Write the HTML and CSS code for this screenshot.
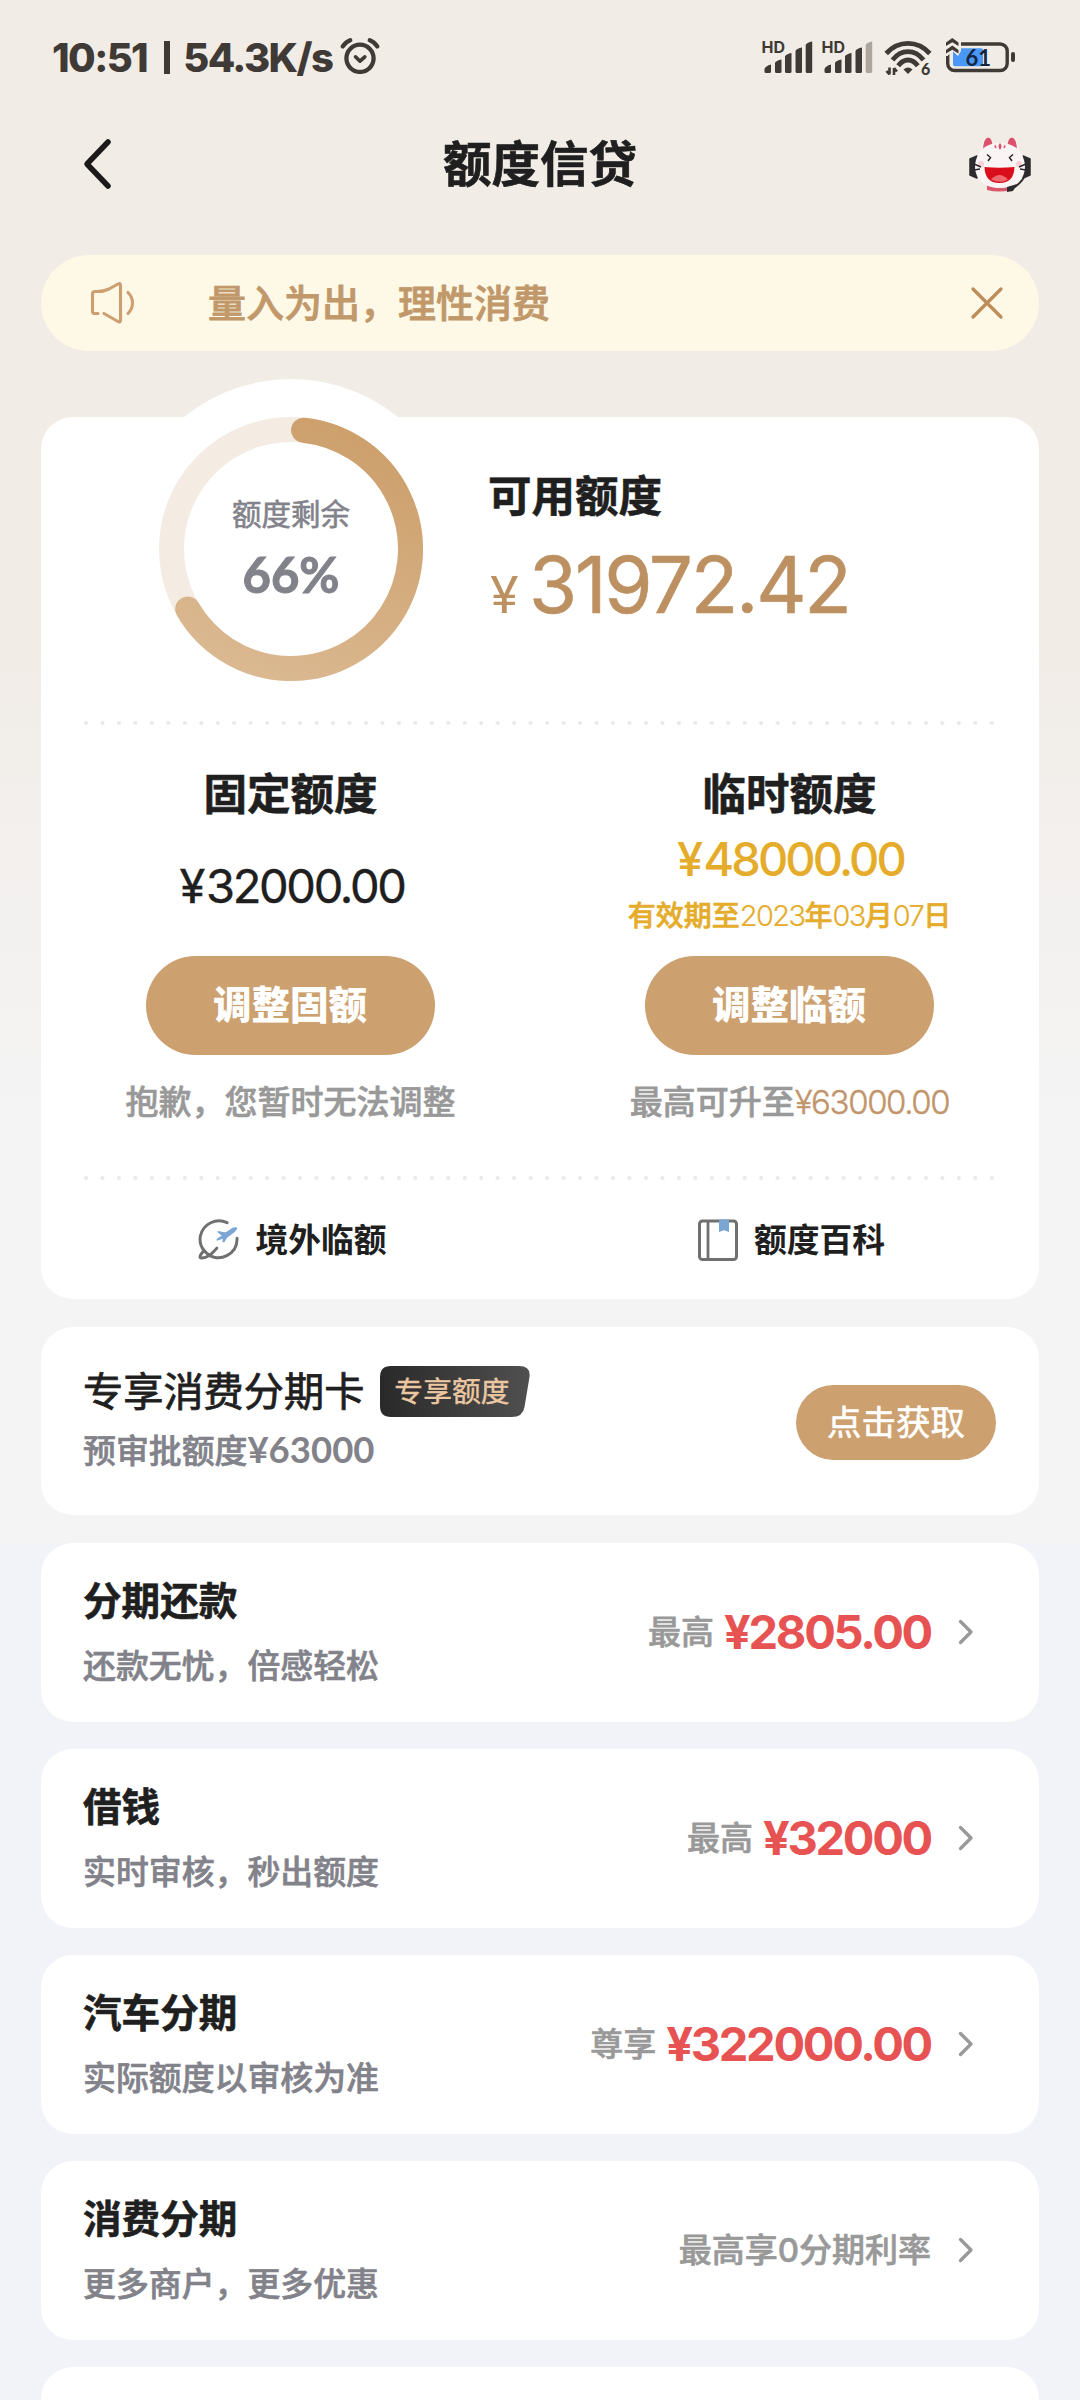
FILE: index.html
```html
<!DOCTYPE html>
<html lang="zh-CN">
<head>
<meta charset="utf-8">
<title>额度信贷</title>
<link rel="stylesheet" href="styles.css">
</head>
<body>
<div class="screen">
  <header class="status">
    <span class="status-time">10:51<i class="bar"></i>54.3K/s</span>
    <svg class="alarm" viewBox="0 0 40 36" width="40" height="36" fill="none" stroke="#403a37" stroke-width="4.300" stroke-linecap="round" stroke-linejoin="round">
      <circle cx="20" cy="20.300" r="13.600"/>
      <path d="M15.500 18.800l4.500 4.400 4.800-4.400" stroke-width="3.600"/>
      <path d="M2.800 8.400Q5.500 4 10.200 2.300M29.800 2.300Q34.500 4 37.200 8.400"/>
    </svg>
    <svg class="indicators" viewBox="760 36 260 44" width="260" height="44" fill="#403a37">
      <g id="sig1">
        <text class="hd" x="761.500" y="53">HD</text>
        <path d="M764.500 71.500V69q1-3 6.500-4.500v7q0 1.500-1.500 1.500H766q-1.500 0-1.500-1.500zM775 71.500V63q1-2.500 6.500-3.500v12q0 1.500-1.500 1.500h-3.500q-1.500 0-1.500-1.500zM785 71.500V56.500q1-2.500 6.500-3.500v18.500q0 1.500-1.500 1.500h-3.500q-1.500 0-1.500-1.500zM795.500 71.500V51q1-2.500 6.500-3.500v24q0 1.500-1.500 1.500H797q-1.500 0-1.500-1.500z"/>
      </g>
      <path d="M805.700 71.500V45q1-2.500 6.500-3.500v30q0 1.500-1.500 1.500h-3.500q-1.500 0-1.500-1.500z"/>
      <use href="#sig1" x="60"/>
      <path fill="#aca69f" d="M865.700 71.500V45q1-2.500 6.500-3.500v30q0 1.500-1.500 1.500h-3.500q-1.500 0-1.500-1.500z"/>
      <g fill="none" stroke="#403a37" stroke-width="4.800">
        <path d="M886.200 53.500Q895.500 43.400 908 43.400T929.800 53.500"/>
        <path d="M892.500 60Q899 51.700 908 51.700T923.500 60"/>
        <path d="M898.200 65.700Q902.500 60 908 60t9.800 5.700"/>
      </g>
      <path d="M903.500 69.500Q908 65.500 912.500 69.500L908 74z"/>
      <path d="M889.500 67.500v7M886.500 71l3 3.500M894 75v-7M894 68l3 3.500" fill="none" stroke="#403a37" stroke-width="2.600"/>
      <text class="wifi-n" x="921" y="75">6</text>
      <rect x="953" y="48.300" width="30" height="18" rx="2" fill="#4997f7"/>
      <rect x="947.700" y="44" width="59.500" height="26.500" rx="7" fill="none" stroke="#403a37" stroke-width="3.400"/>
      <path d="M943 36h18v15l-3 5-5.500-5-5 5H943z" fill="#f1ece6"/>
      <path d="M946 46v-3.500l6.300-4.500 6.200 4.500V46l-6.200-3.700zM946 53.500V50l6.300-4.500 6.200 4.500v3.500l-6.200-3.700z"/>
      <rect x="1011" y="52" width="4" height="10" rx="2"/>
      <text class="batt-n" x="965.500" y="66">61</text>
    </svg>
  </header>

  <nav class="navbar">
    <svg class="back" viewBox="0 0 34 56" width="34" height="56"><path d="M27 6L6 28l21 22" fill="none" stroke="#1c1a19" stroke-width="5.500" stroke-linecap="round" stroke-linejoin="round"/></svg>
    <h1 class="title">额度信贷</h1>
    <svg class="mascot" viewBox="0 0 62 56" width="62" height="56">
      <path d="M1 23l7-3v22l-7-3zM54 20l7 3v16l-7 3z" fill="#2c2b2d" stroke="#2c2b2d" stroke-width="1.500" stroke-linejoin="round"/>
      <path d="M18 48h24v6q-12 3-24 0z" fill="#d9586c"/>
      <path d="M12 18Q12 2 18.500 1q4.500 0 6 9zM50 18Q50 2 43.500 1q-4.500 0-6 9z" fill="#fbf4f5"/>
      <path d="M14 14Q14.500 2 19 1.500q3.500 0 4.500 7zM48 14Q47.500 2 43 1.500q-3.500 0-4.500 7z" fill="#d9536b"/>
      <path d="M31 7c16 0 24 10 25 23 0 15-11 22-25 22S6 45 6 30C7 17 15 7 31 7z" fill="#fbf4f5"/>
      <path d="M31 7q3 3 0 7-3-4 0-7zM26 8.500q2 2 1 4-2.500-1.500-1-4zM36 8.500q-2 2-1 4 2.500-1.500 1-4z" fill="#d9536b"/>
      <circle cx="12" cy="28" r="3" fill="#f9cfd4"/><circle cx="50" cy="28" r="3" fill="#f9cfd4"/>
      <path d="M18 18.500l3.500 3-2.500 3.500M44 18.500l-3.500 3 2.500 3.500M5 28l7 3M5 34l6-1M57 28l-7 3M57 34l-6-1" fill="none" stroke="#29272a" stroke-width="1.500"/>
      <path d="M15.500 31q15 1.500 30 0Q45 47 30.500 47T15.500 31z" fill="#d90d1b"/>
      <path d="M22 43.500q8.500-9 17 0-7 4.500-17 0z" fill="#ee6a70"/>
      <path d="M57 37Q54 46 43 53" fill="none" stroke="#2c2b2d" stroke-width="2"/>
      <path d="M38 51l10-3-4 7-6 1z" fill="#2c2b2d"/>
    </svg>
  </nav>

  <section class="notice">
    <svg class="speaker" viewBox="0 0 46 44" width="46" height="44" fill="none" stroke="#cd9f70" stroke-width="3.100" stroke-linecap="round" stroke-linejoin="round">
      <path d="M8 32.500H4.500q-2 0-2-2V13q0-2.500 2.500-2.500 8 .5 14-2.500l9-5q2.500-1.500 2.500 1.500V39q0 3-2.500 1.500L14 32.500"/>
      <path d="M38 11.500q4.500 4.500 4.500 10.500T38 32.500"/>
    </svg>
    <p class="notice-text">量入为出，理性消费</p>
    <svg class="close" viewBox="0 0 36 36" width="36" height="36"><path d="M4 4l28 28M32 4L4 32" stroke="#bd8c58" stroke-width="3.300" stroke-linecap="round"/></svg>
  </section>

  <main class="stack">
    <section class="card quota">
      <div class="overview">
        <div class="gauge">
          <svg viewBox="0 0 264 264" width="264" height="264" fill="none" stroke-width="25">
            <defs><linearGradient id="arc" x1=".7" y1="0" x2=".3" y2="1"><stop offset="0" stop-color="#cda06c"/><stop offset="1" stop-color="#dab890"/></linearGradient></defs>
            <circle cx="132" cy="132" r="119.500" stroke="#f4ebe3"/>
            <path d="M144.500 13.200A119.500 119.500 0 1 1 28.700 192.100" stroke="url(#arc)" stroke-linecap="round"/>
          </svg>
          <div class="gauge-text">
            <span class="gauge-label">额度剩余</span>
            <span class="gauge-value">66%</span>
          </div>
        </div>
        <div class="available">
          <h2 class="h2">可用额度</h2>
          <p class="big"><span class="yen">¥</span><span class="amount">31972.42</span></p>
        </div>
      </div>
      <div class="dots"></div>
      <div class="limits">
        <div class="limit">
          <h2 class="h2">固定额度</h2>
          <p class="sum sum-fixed"><span class="sum-yen">¥</span>32000.00</p>
          <a class="btn">调整固额</a>
          <p class="hint">抱歉，您暂时无法调整</p>
        </div>
        <div class="limit">
          <h2 class="h2">临时额度</h2>
          <p class="sum sum-temp"><span class="sum-yen">¥</span>48000.00</p>
          <p class="valid">有效期至<span class="n">2023</span>年<span class="n">03</span>月<span class="n">07</span>日</p>
          <a class="btn">调整临额</a>
          <p class="hint">最高可升至<span class="hint-sum">¥63000.00</span></p>
        </div>
      </div>
      <div class="dots"></div>
      <div class="links">
        <a class="link">
          <svg viewBox="0 0 122 124" width="41" height="41">
            <g fill="none" stroke="#707070" stroke-width="9" stroke-linecap="round" stroke-linejoin="round"><path d="M87 11C55-4 14 13 6 52c-3 18 2 32 12 44 19 23 46 26 68 15 22-11 32-30 31-53"/><path d="M17 95C2 112 3 118 9 118c16 1 34-14 47-30"/></g>
            <path d="M56 38q10-3 16 1l11 1 22-14q10-2 13 1-2 8-9 13L87 57l-9 14q-4 0-5-3l1-8-18 6q-3-4 2-8l13-7z" fill="#7ba5d3"/>
          </svg>
          <span>境外临额</span>
        </a>
        <a class="link">
          <svg viewBox="0 0 40 42" width="40" height="42"><rect x="1.500" y="2" width="37" height="38.500" rx="3" fill="none" stroke="#707070" stroke-width="3"/><path d="M10 2v38" stroke="#707070" stroke-width="2.800"/><path d="M21 .5h10V13l-5-1.800-5 1.800z" fill="#7ba5d3"/></svg>
          <span>额度百科</span>
        </a>
      </div>
    </section>

    <section class="card exclusive">
      <div class="info">
        <div class="ex-head"><h3 class="ex-title">专享消费分期卡</h3>
          <span class="tag"><svg class="tag-bg" viewBox="0 0 150 51" width="150" height="51"><defs><linearGradient id="tg"><stop offset="0" stop-color="#292929"/><stop offset="1" stop-color="#505050"/></linearGradient></defs><path d="M11 0h128q12 0 10.500 11l-5 30q-1.500 10-13 10H11Q0 51 0 40V11Q0 0 11 0z" fill="url(#tg)"/></svg><span class="tag-text">专享额度</span></span>
        </div>
        <p class="sub">预审批额度<span class="sub-n">¥63000</span></p>
      </div>
      <a class="btn-small">点击获取</a>
    </section>

    <section class="card row">
      <div class="info"><h3 class="row-title">分期还款</h3><p class="sub">还款无忧，倍感轻松</p></div>
      <p class="right"><span class="pre">最高</span><b class="price">¥2805.00</b><svg class="chev" viewBox="0 0 18 28" width="18" height="28"><path d="M3.500 3.500L14 14 3.500 24.500"/></svg></p>
    </section>
    <section class="card row">
      <div class="info"><h3 class="row-title">借钱</h3><p class="sub">实时审核，秒出额度</p></div>
      <p class="right"><span class="pre">最高</span><b class="price">¥32000</b><svg class="chev" viewBox="0 0 18 28" width="18" height="28"><path d="M3.500 3.500L14 14 3.500 24.500"/></svg></p>
    </section>
    <section class="card row">
      <div class="info"><h3 class="row-title">汽车分期</h3><p class="sub">实际额度以审核为准</p></div>
      <p class="right"><span class="pre">尊享</span><b class="price">¥322000.00</b><svg class="chev" viewBox="0 0 18 28" width="18" height="28"><path d="M3.500 3.500L14 14 3.500 24.500"/></svg></p>
    </section>
    <section class="card row">
      <div class="info"><h3 class="row-title">消费分期</h3><p class="sub">更多商户，更多优惠</p></div>
      <p class="right"><span class="pre">最高享0分期利率</span><svg class="chev" viewBox="0 0 18 28" width="18" height="28"><path d="M3.500 3.500L14 14 3.500 24.500"/></svg></p>
    </section>
    <section class="card row"></section>
  </main>
</div>
</body>
</html>
```
FILE: styles.css
```css
* { box-sizing: border-box; margin: 0; padding: 0; }
body { width: 1080px; height: 2400px; overflow: hidden; font-family: Inter, "Noto Sans CJK SC", sans-serif; color: #1f1f1f; }
svg { display: block; flex: none; }
h1, h2, h3 { font-weight: 700; -webkit-text-stroke: .6px currentColor; }
.screen {
  height: 2400px; overflow: hidden; white-space: nowrap;
  background: linear-gradient(#f1ece6 0, #f1ece6 650px, #f3f0ee 850px, #f4f4f4 1130px, #f4f4f4 1543px, #f2f3f8 1544px);
}

.status { height: 110px; padding: 36px 60px 0 52px; display: flex; align-items: flex-start; color: #403a37; }
.status-time { font-size: 40px; line-height: 43px; font-weight: 800; letter-spacing: -1.600px; width: 288px; display: flex; align-items: center; }
.bar { width: 6px; height: 33px; margin: 0 13px 0 17px; background: #403a37; }
.alarm { margin-top: 2px; }
.indicators { margin-left: auto; }
.hd { font: 700 16px Inter, sans-serif; }
.wifi-n { font: 900 16px Lato, sans-serif; }
.batt-n { font: 700 22px Lato, sans-serif; fill: #14253f; }

.navbar { height: 108px; padding: 0 49px 0 81px; display: grid; grid-template-columns: 62px 1fr 62px; align-items: center; }
.title { text-align: center; font-size: 48.500px; line-height: 72px; padding: 2px 32px 0 0; }

.notice { margin: 37px 41px 66px; height: 96px; border-radius: 48px; background: #fef8e7; display: flex; align-items: center; padding: 0 34px 0 49px; }
.notice-text { margin-left: 72px; font-size: 38px; line-height: 56px; font-weight: 500; color: #c0986a; -webkit-text-stroke: .8px currentColor; flex: 1; }

.stack { margin: 0 41px; display: flex; flex-direction: column; gap: 27px; }
.card { background: #fff; border-radius: 32px; }

.quota { height: 882px; position: relative; margin-bottom: 1px; }
.quota::before { content: ""; position: absolute; left: 80px; top: -38px; width: 340px; height: 340px; border-radius: 50%; background: #fff; }
.overview { position: relative; height: 304px; padding-left: 118px; display: flex; }
.gauge { width: 264px; height: 264px; display: grid; }
.gauge > * { grid-area: 1 / 1; }
.gauge-text { display: flex; flex-direction: column; align-items: center; padding-top: 75px; color: #82828b; }
.gauge-label { font-size: 29.500px; line-height: 44px; -webkit-text-stroke: .6px currentColor; }
.gauge-value { font-family: Lato, sans-serif; font-weight: 700; font-size: 49px; line-height: 56px; margin-top: 10px; -webkit-text-stroke: 1px currentColor; }
.available { padding: 48px 0 0 65px; }
.h2 { font-size: 43.500px; line-height: 62px; }
.big { display: flex; align-items: baseline; color: #bd9062; line-height: 90px; margin-top: 13px; }
.yen { font-size: 51px; width: 41px; padding-left: 2px; transform: scaleX(1.020); transform-origin: 0 50%; }
.amount { font-size: 78px; letter-spacing: -2.300px; -webkit-text-stroke: .6px currentColor; }
.dots { margin: 0 43px; height: 4px; background: radial-gradient(circle at 2px 2px, #eaeaea 1.800px, transparent 2.300px) 0 0 / 16.480px 4px repeat-x; }

.limits { display: grid; grid-template-columns: 1fr 1fr; height: 451px; padding-top: 38px; }
.limit { display: flex; flex-direction: column; align-items: center; }
.sum { font-size: 47px; line-height: 60px; letter-spacing: -2.300px; -webkit-text-stroke: .4px currentColor; }
.sum-yen { margin-right: 3px; }
.sum-fixed { margin: 31px 0 40px; padding-left: 3px; }
.sum-temp { margin-top: 4px; padding-left: 2px; color: #e5ac2b; font-weight: 500; letter-spacing: -2.900px; -webkit-text-stroke: 0; }
.valid { font-size: 28px; line-height: 44px; margin: 5px 0 18px; font-weight: 500; color: #e5ac2b; -webkit-text-stroke: .6px currentColor; }
.valid .n { font-weight: 300; font-size: 29px; letter-spacing: -1.600px; -webkit-text-stroke: .2px currentColor; }
.btn { width: 289px; height: 99px; border-radius: 50px; background: #cca06f; color: #fff; font-weight: 800; font-size: 38.500px; line-height: 98px; text-align: center; margin-right: 1px; }
.hint { margin-top: 22px; font-size: 33px; line-height: 51px; font-weight: 500; color: #999; -webkit-text-stroke: .6px currentColor; }
.hint-sum { font-weight: 300; color: #c2946b; letter-spacing: -1.400px; -webkit-text-stroke: .4px currentColor; }
.links { display: grid; grid-template-columns: 1fr 1fr; height: 119px; align-items: center; }
.link { display: flex; align-items: center; justify-content: center; gap: 16px; padding-left: 4px; font-size: 32.800px; line-height: 48px; font-weight: 700; }

.exclusive { height: 188px; display: flex; justify-content: space-between; padding: 33px 43px 0 42px; margin-bottom: 1px; }
.ex-head { display: flex; height: 62px; }
.ex-title { font-size: 40.200px; line-height: 64px; font-weight: 400; -webkit-text-stroke: .8px currentColor; }
.tag { display: grid; margin: 6px 0 0 16px; height: 51px; }
.tag > * { grid-area: 1 / 1; }
.tag-text { font-size: 28.800px; line-height: 51px; padding-left: 14px; color: #ecc8a2; -webkit-text-stroke: .4px currentColor; position: relative; }
.sub { font-size: 32.900px; line-height: 48px; font-weight: 500; color: #82828a; -webkit-text-stroke: .6px currentColor; }
.exclusive .sub { margin-top: 3px; }
.sub-n { font-family: Lato, sans-serif; font-weight: 700; font-size: 36.500px; -webkit-text-stroke: 0; }
.btn-small { width: 200px; height: 75px; border-radius: 38px; margin-top: 25px; background: #cca06f; color: #fff; font-size: 34.500px; line-height: 75px; text-align: center; -webkit-text-stroke: .6px currentColor; }

.row { height: 179px; flex: none; display: flex; justify-content: space-between; padding: 30px 64px 0 42px; }
.row-title { font-size: 38.600px; line-height: 56px; }
.row .sub { margin-top: 13px; }
.right { display: flex; align-items: center; height: 118px; }
.pre { font-size: 33px; line-height: 48px; font-weight: 500; color: #999; -webkit-text-stroke: .6px currentColor; }
.price { margin-left: 10px; font-size: 47px; line-height: 60px; font-weight: 700; color: #e75353; letter-spacing: -2.300px; }
.chev { margin-left: 26px; }
.chev path { fill: none; stroke: #999; stroke-width: 3.300; stroke-linecap: round; stroke-linejoin: round; }
```
